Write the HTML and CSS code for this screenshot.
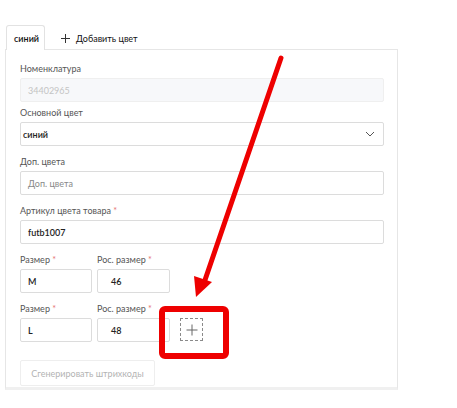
FILE: index.html
```html
<!DOCTYPE html>
<html lang="ru">
<head>
<meta charset="utf-8">
<link rel="stylesheet" href="styles.css">
</head>
<body>
<div class="page">
  <div class="tabs">
    <div class="tab tab-active">синий</div>
    <div class="tab tab-add">
      <svg class="tab-plus" width="9" height="9" viewBox="0 0 9 9"><path d="M4.5 0V9M0 4.5H9" stroke="#333" stroke-width="1"/></svg>
      <span>Добавить цвет</span>
    </div>
  </div>
  <div class="panel">
    <div class="group group-first">
      <div class="label">Номенклатура</div>
      <div class="input input-disabled">34402965</div>
    </div>
    <div class="group">
      <div class="label">Основной цвет</div>
      <div class="input select">
        <span>синий</span>
        <svg class="chevron" width="10" height="6" viewBox="0 0 10 6"><path d="M1 1L5 5L9 1" fill="none" stroke="#555" stroke-width="1"/></svg>
      </div>
    </div>
    <div class="group">
      <div class="label">Доп. цвета</div>
      <div class="input placeholder">Доп. цвета</div>
    </div>
    <div class="group">
      <div class="label">Артикул цвета товара <span class="req">*</span></div>
      <div class="input value">futb1007</div>
    </div>
    <div class="size-row">
      <div class="size-col">
        <div class="label">Размер <span class="req">*</span></div>
        <div class="input value small">M</div>
      </div>
      <div class="size-col">
        <div class="label">Рос. размер <span class="req">*</span></div>
        <div class="input value small indent">46</div>
      </div>
    </div>
    <div class="size-row">
      <div class="size-col">
        <div class="label">Размер <span class="req">*</span></div>
        <div class="input value small">L</div>
      </div>
      <div class="size-col">
        <div class="label">Рос. размер <span class="req">*</span></div>
        <div class="input value small indent">48</div>
      </div>
      <div class="add-box">
        <svg width="12" height="12" viewBox="0 0 12 12"><path d="M6 0.5V11.5M0.5 6H11.5" stroke="#666" stroke-width="1"/></svg>
      </div>
    </div>
    <div class="btn">Сгенерировать штрихкоды</div>
  </div>
  <svg class="overlay" width="457" height="408" viewBox="0 0 457 408">
    <line x1="281" y1="58" x2="205" y2="280" stroke="#ee0000" stroke-width="5" stroke-linecap="round"/>
    <polygon points="196,297 194,276 212,282" fill="#ee0000"/>
    <rect x="162" y="309" width="64" height="47" rx="3" fill="none" stroke="#ee0000" stroke-width="6"/>
  </svg>
</div>
</body>
</html>
```
FILE: styles.css
```css
* { box-sizing: border-box; }
html, body { margin: 0; padding: 0; background: #fff; }
body {
  font-family: Lato, "Noto Sans", sans-serif;
  font-size: 9px;
  color: #333;
}
.page { position: relative; width: 457px; height: 408px; padding-top: 25px; }
.tabs { display: flex; align-items: flex-end; padding-left: 6px; height: 25px; position: relative; z-index: 1; }
.tab { height: 25px; display: flex; align-items: center; }
.tab-active {
  width: 39px;
  border: 1px solid #e2e2e2;
  border-bottom: none;
  border-radius: 3px 3px 0 0;
  background: #fff;
  padding-left: 7px;
  color: #111;
  font-weight: 600;
  padding-top: 1px;
}
.tab-add { padding-left: 16px; gap: 6px; color: #111; padding-top: 1px; }
.tab-plus { display: block; }
.panel {
  margin-left: 5px;
  width: 393px;
  margin-top: -1px;
  border: 1px solid #e6e6e6;
  border-bottom: 3px solid #f0f0f0;
  padding: 13px 13px 0 14px;
}
.group { margin-bottom: 10px; }
.group-first { margin-bottom: 5px; }
.label { height: 12px; line-height: 12px; color: #555; margin-bottom: 3px; }
.req { color: #e57373; }
.input {
  height: 24px;
  border: 1px solid #dcdcdc;
  border-radius: 2px;
  display: flex;
  align-items: center;
  padding-left: 7px;
  color: #222;
}
.input-disabled { background: #f7f8fa; border-color: #efefef; color: #c4c4c4; }
.select { padding-left: 2px; padding-right: 8px; justify-content: space-between; font-weight: 600; }
.chevron { display: block; }
.placeholder { color: #888; }
.value { color: #222; font-weight: 600; }
.size-row { display: flex; align-items: flex-end; gap: 5px; margin-bottom: 10px; }
.size-col { width: 72px; }
.size-col + .size-col { width: 73px; }
.small { height: 24px; }
.indent { padding-left: 13px; }
.add-box {
  width: 23px;
  height: 23px;
  margin-left: 5px;
  margin-bottom: 1px;
  border: 1px dashed #8a8a8a;
  display: flex;
  align-items: center;
  justify-content: center;
}
.add-box svg { display: block; }
.btn {
  margin-top: 18px;
  width: 135px;
  height: 26px;
  border: 1px solid #eeeeee;
  border-radius: 2px;
  display: flex;
  align-items: center;
  justify-content: center;
  color: #b3b3b3;
  margin-bottom: 1px;
}
.overlay { position: absolute; left: 0; top: 0; pointer-events: none; z-index: 5; }
```
